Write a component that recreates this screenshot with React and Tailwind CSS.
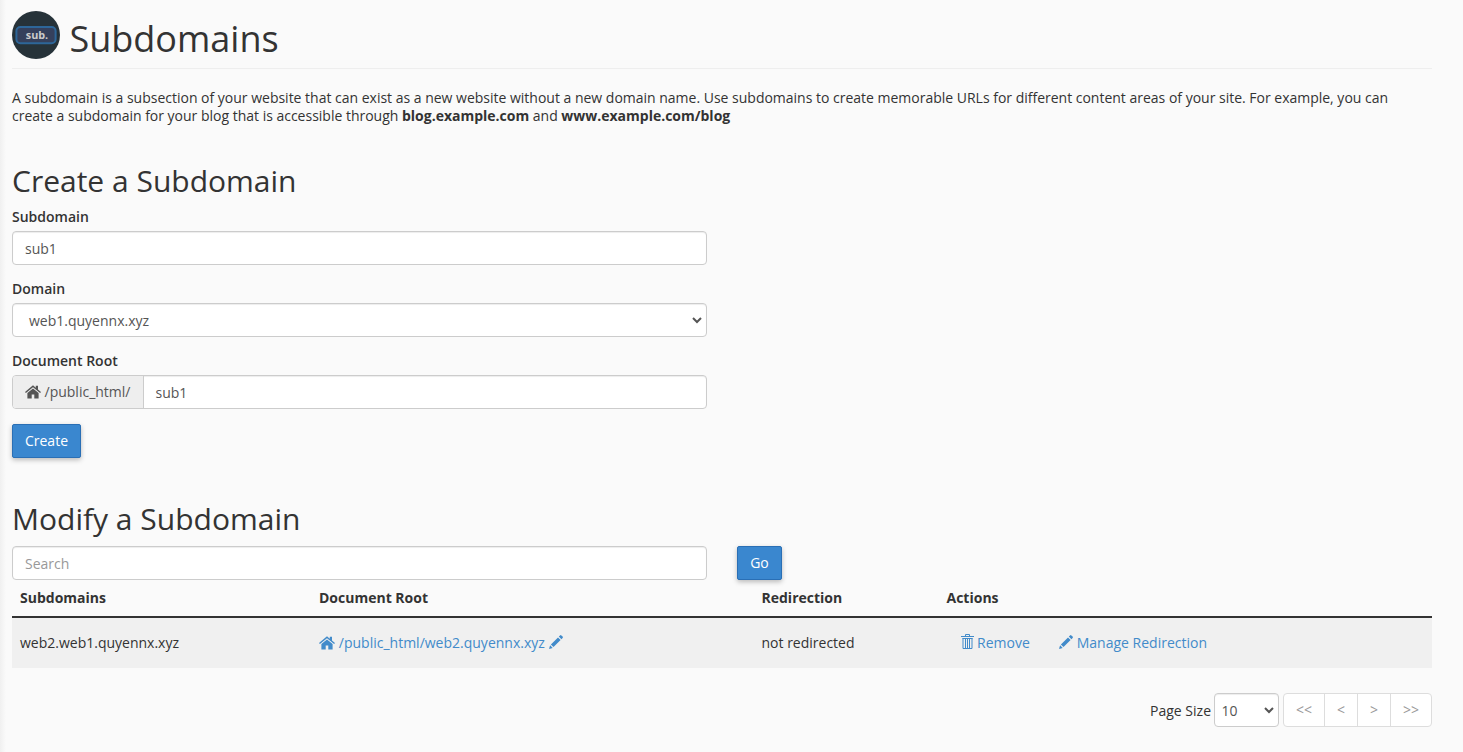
import React from 'react';

function HomeIcon() {
  return (
    <svg className="h-[14px] w-4 shrink-0" viewBox="0 0 16 14" fill="currentColor">
      <path d="M8 .3 0 7l.9 1.1L8 2.3l7.1 5.8L16 7l-3-2.5V.8h-2.2v1.9z" />
      <path d="M8 3.5 2.4 8.1V13.5h4.3V9.6h2.6v3.9h4.3V8.1z" />
    </svg>
  );
}

function PencilIcon() {
  return (
    <svg className="mb-[2px] size-[14px] shrink-0" viewBox="0 0 14 14" fill="currentColor">
      <path d="m0 14 1.1-3.7 2.6 2.6zM1.9 9.5 9 2.4l2.6 2.6-7.1 7.1zM9.8 1.6 11 .4q.7-.7 1.4 0l1.2 1.2q.7.7 0 1.4l-1.2 1.2z" />
    </svg>
  );
}

function TrashIcon() {
  return (
    <svg className="mb-[3px] h-[15px] w-[13px] shrink-0" viewBox="0 0 13 15" fill="none" stroke="currentColor">
      <path d="M0 2.5h13M4.5 2V.5h4V2M1.5 4.5h10M2 4v10.5h9V4M4.5 5v9M6.5 5v9M8.5 5v9" />
    </svg>
  );
}

function Chevron() {
  return (
    <svg className="h-[7px] w-[10px] shrink-0" viewBox="0 0 10 7" fill="none" stroke="#555" strokeWidth="2">
      <path d="m1 1 4 4 4-4" />
    </svg>
  );
}

const field =
  'flex h-[34px] items-center rounded-[4px] border border-[#ccc] bg-white text-[#555] shadow-[inset_0_1px_1px_rgba(0,0,0,0.075)]';
const button =
  'h-[34px] rounded-[2px] border border-[#2a6fb5] bg-[#3a87cf] text-white shadow-[0_2px_5px_rgba(0,0,0,0.26)]';

function Label({ children }) {
  return <label className="mb-[5px] block font-semibold">{children}</label>;
}

export default function App() {
  return (
    <div className="flex h-[752px] bg-[#fafafa] font-['Open_Sans',sans-serif] text-[14px] leading-[18px] text-[#333]">
      <div className="w-[6px] shrink-0 bg-gradient-to-r from-[#f0f0f0] to-[#fafafa]" />
      <main className="ml-[6px] w-[1420px]">
        <header className="flex h-[69px] border-b border-[#eee] pt-[11px]">
          <svg className="size-12" viewBox="0 0 48 48">
            <circle cx="24" cy="24" r="24" fill="#263239" />
            <rect x="4.4" y="16" width="39.2" height="16.3" rx="4" fill="#35405c" stroke="#2d6699" strokeWidth="2" />
            <text x="25" y="28" textAnchor="middle" fontFamily="Open Sans" fontWeight="700" fontSize="10.8" fill="#ccc">sub.</text>
          </svg>
          <h1 className="ml-[9.5px] mt-[8px] text-[36px] font-normal leading-[40px]">Subdomains</h1>
        </header>

        <p className="mt-5 whitespace-nowrap tracking-[-0.007px]">
          A subdomain is a subsection of your website that can exist as a new website without a new domain name. Use subdomains to create memorable URLs for different content areas of your site. For example, you can<br />
          create a subdomain for your blog that is accessible through <b>blog.example.com</b> and <b>www.example.com/blog</b>
        </p>

        <section className="mt-[39px] w-[695px]">
          <h2 className="mb-[11px] text-[30px] font-normal leading-[33px]">Create a Subdomain</h2>
          <Label>Subdomain</Label>
          <div className={`${field} mb-[15px] px-3 pt-[2px]`}>sub1</div>
          <Label>Domain</Label>
          <div className={`${field} mb-[15px] justify-between pl-4 pr-1`}>
            <span className="pt-[2px]">web1.quyennx.xyz</span>
            <Chevron />
          </div>
          <Label>Document Root</Label>
          <div className={`${field} mb-[15px]`}>
            <div className="flex h-full w-[131px] items-center gap-[3.5px] rounded-l-[3px] border-r border-[#ccc] bg-[#eee] pl-3">
              <HomeIcon />
              /public_html/
            </div>
            <span className="pl-[11.5px] pt-[2px]">sub1</span>
          </div>
          <button className={`${button} w-[69px]`}>Create</button>
        </section>

        <section className="mt-[44px]">
          <h2 className="mb-[11px] text-[30px] font-normal leading-[33px]">Modify a Subdomain</h2>
          <div className="flex gap-[30px]">
            <div className={`${field} w-[695px] px-3 pt-[2px] text-[#999]`}>Search</div>
            <button className={`${button} w-[45px]`}>Go</button>
          </div>
          <div className="grid h-[38px] grid-cols-[299px_442.5px_185px_1fr] items-center border-b-2 border-[#333] pl-2 font-bold">
            <span>Subdomains</span>
            <span>Document Root</span>
            <span>Redirection</span>
            <span>Actions</span>
          </div>
          <div className="grid h-[50px] grid-cols-[299px_442.5px_185px_1fr] items-center bg-[#f0f0f0] pl-2">
            <span>web2.web1.quyennx.xyz</span>
            <span className="flex items-center gap-[3.8px] text-[#428bca]">
              <HomeIcon />
              /public_html/web2.quyennx.xyz
              <PencilIcon />
            </span>
            <span>not redirected</span>
            <span className="flex items-center text-[#428bca]">
              <span className="ml-[14px] flex items-center gap-[3.5px]">
                <TrashIcon />
                Remove
              </span>
              <span className="ml-[29px] flex items-center gap-[4px]">
                <PencilIcon />
                Manage Redirection
              </span>
            </span>
          </div>
          <div className="mt-[25px] flex items-center justify-end">
            <span className="mr-[3px] pt-[2px]">Page Size</span>
            <div className={`${field} mr-1 w-[65px] justify-between pl-[6.5px] pr-1`}>
              <span className="pt-[2px]">10</span>
              <Chevron />
            </div>
            <div className="grid h-[34px] w-[149px] grid-cols-[41px_33px_33px_40px] divide-x divide-[#ddd] rounded-[4px] border border-[#ddd] bg-white text-center leading-[32px] text-[#999]">
              <span>&lt;&lt;</span>
              <span>&lt;</span>
              <span>&gt;</span>
              <span>&gt;&gt;</span>
            </div>
          </div>
        </section>
      </main>
    </div>
  );
}
